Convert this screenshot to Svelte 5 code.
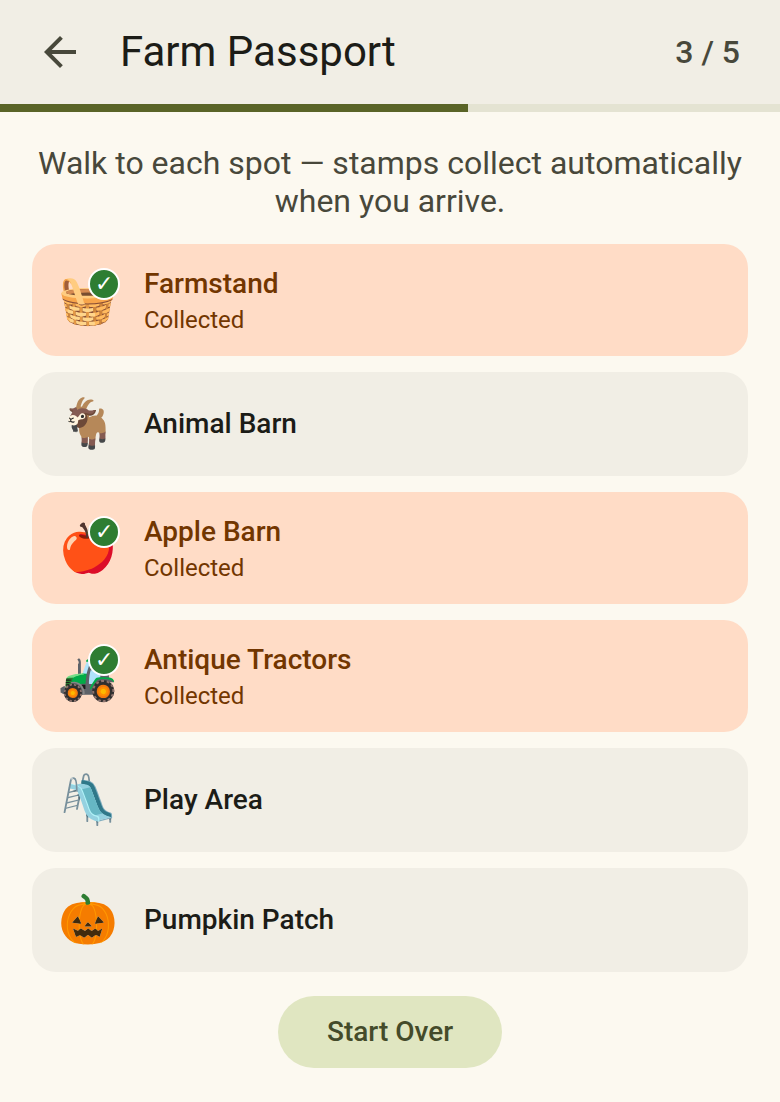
<script lang="ts">
  const stops = [
    { emoji: '🧺', name: 'Farmstand', collected: true },
    { emoji: '🐐', name: 'Animal Barn', collected: false },
    { emoji: '🍎', name: 'Apple Barn', collected: true },
    { emoji: '🚜', name: 'Antique Tractors', collected: true },
    { emoji: '🛝', name: 'Play Area', collected: false },
    { emoji: '🎃', name: 'Pumpkin Patch', collected: false },
  ]
  const goal = 5

  let collected = $state(stops.map((stop) => stop.collected))
  let count = $derived(collected.filter(Boolean).length)

  function startOver() {
    collected = stops.map(() => false)
  }
</script>

<header>
  <button class="back" type="button" aria-label="Back">
    <svg viewBox="0 0 24 24" width="48" height="48" fill="currentColor">
      <path d="M20 11H7.83l5.59-5.59L12 4l-8 8 8 8 1.41-1.41L7.83 13H20v-2z" />
    </svg>
  </button>
  <h1>Farm Passport</h1>
  <span class="count">{count} / {goal}</span>
</header>
<div
  class="progress"
  role="progressbar"
  aria-label="Stamps collected"
  aria-valuenow={count}
  aria-valuemin="0"
  aria-valuemax={goal}
>
  <div class="bar" style="width: {(count / goal) * 100}%"></div>
</div>

<main>
  <p class="intro">Walk to each spot — stamps collect automatically when you arrive.</p>

  <ul>
    {#each stops as stop, i}
      <li class:collected={collected[i]}>
        <div class="stamp">
          <span class="emoji" aria-hidden="true">{stop.emoji}</span>
          {#if collected[i]}
            <span class="check">✓</span>
          {/if}
        </div>
        <div class="label">
          <div class="name">{stop.name}</div>
          {#if collected[i]}
            <div class="status">Collected</div>
          {/if}
        </div>
      </li>
    {/each}
  </ul>

  <button class="reset" type="button" onclick={startOver}>Start Over</button>
</main>

<style>
  :global(body) {
    background: #fcf9f0;
    color: #1c1c17;
    font-family: Roboto, 'Liberation Sans', sans-serif;
  }
  header {
    display: flex;
    align-items: center;
    gap: 12px;
    height: 104px;
    padding: 0 40px 0 12px;
    background: #f1eee5;
  }
  button {
    border: 0;
    font-family: inherit;
    cursor: pointer;
  }
  .back {
    display: flex;
    align-items: center;
    justify-content: center;
    width: 96px;
    height: 96px;
    padding: 0;
    background: none;
    color: #48483b;
  }
  h1 {
    flex: 1;
    margin: 0;
    font-size: 42px;
    font-weight: 400;
    line-height: 56px;
  }
  .count {
    color: #48483b;
    font-size: 32px;
    font-weight: 500;
    line-height: 48px;
  }
  .progress {
    height: 8px;
    background: #e4e3d2;
  }
  .bar {
    height: 100%;
    background: #5a6427;
  }
  main {
    display: flex;
    flex-direction: column;
    align-items: center;
    gap: 24px;
    padding: 32px 32px 34px;
  }
  .intro {
    margin: 0;
    color: #48483b;
    font-size: 32px;
    line-height: 38px;
    text-align: center;
  }
  ul {
    display: flex;
    flex-direction: column;
    gap: 16px;
    width: 100%;
    margin: 0;
    padding: 0;
    list-style: none;
  }
  li {
    display: flex;
    align-items: center;
    gap: 24px;
    padding: 20px 24px;
    border-radius: 24px;
    background: #f1eee5;
  }
  .stamp {
    position: relative;
    display: flex;
    align-items: center;
    justify-content: center;
    width: 64px;
    height: 64px;
  }
  .emoji {
    font-family: 'Noto Color Emoji', sans-serif;
    font-size: 48px;
    line-height: 64px;
  }
  .check {
    position: absolute;
    top: 0;
    right: 0;
    box-sizing: border-box;
    width: 32px;
    height: 32px;
    border: 2px solid #fff;
    border-radius: 50%;
    background: #2e7d32;
    color: #fff;
    font-size: 22px;
    line-height: 28px;
    text-align: center;
  }
  .name {
    font-size: 28px;
    font-weight: 500;
    line-height: 40px;
  }
  .status {
    font-size: 24px;
    line-height: 32px;
  }
  .collected {
    background: #ffdcc6;
    color: #723600;
  }
  .reset {
    min-width: 224px;
    height: 72px;
    padding: 0 48px;
    border-radius: 36px;
    background: #e0e6c1;
    color: #444b2a;
    font-size: 28px;
    font-weight: 500;
    line-height: 40px;
  }
</style>
